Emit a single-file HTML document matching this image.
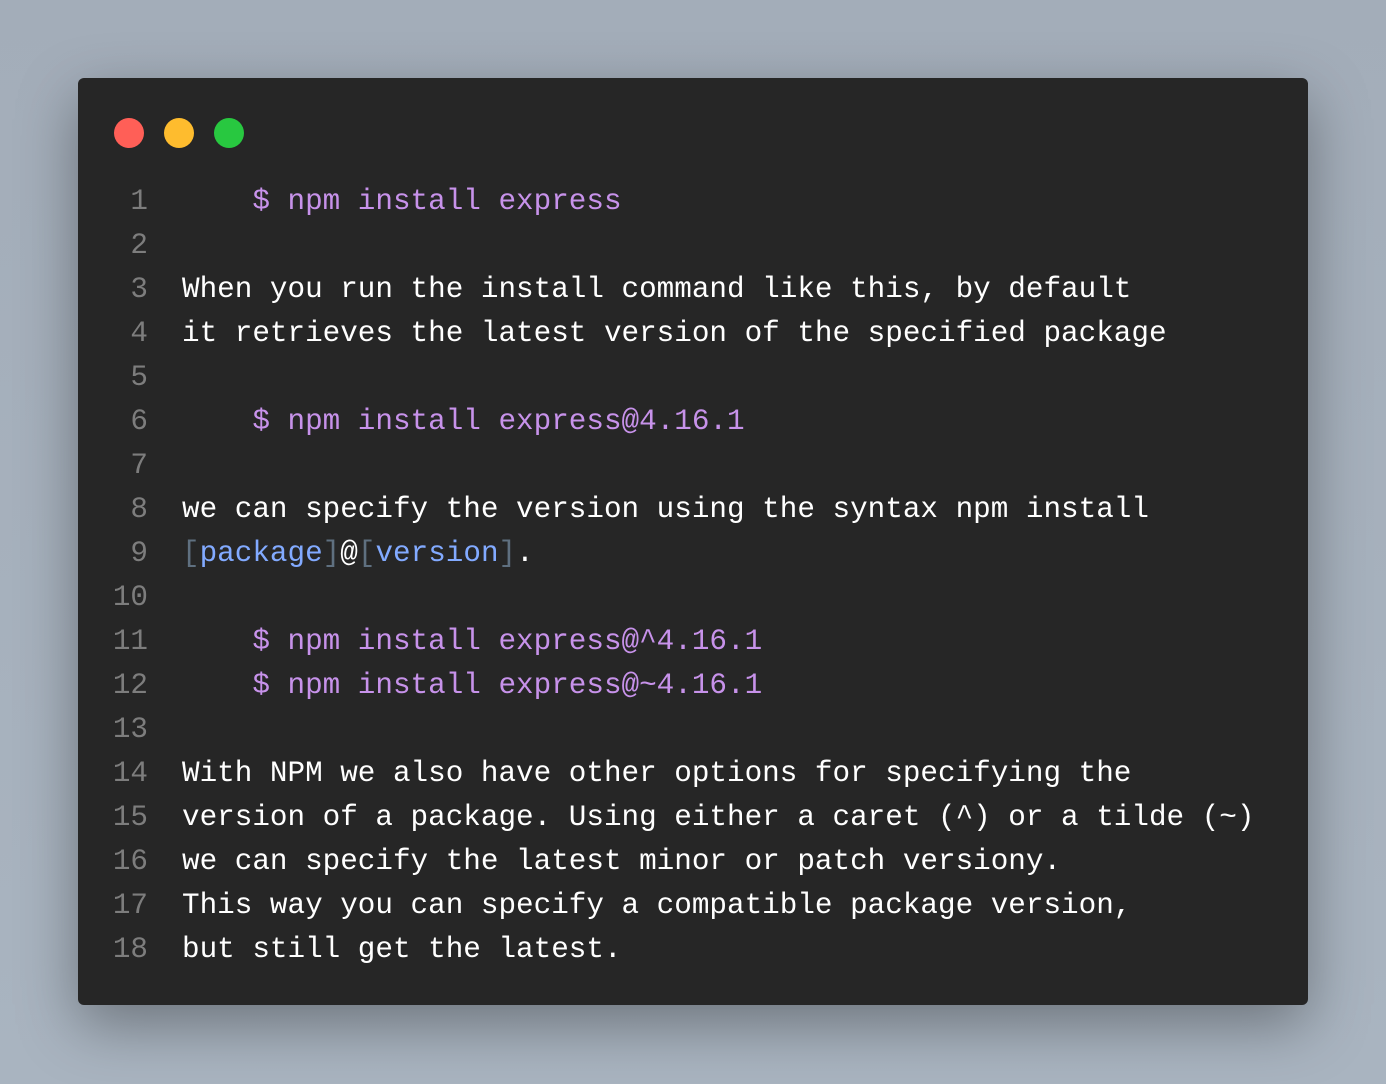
<!DOCTYPE html>
<html><head><style>
html,body{margin:0;padding:0;width:1386px;height:1084px;overflow:hidden;background:linear-gradient(180deg,#a3adb9,#a9b4c0);}
.card{position:absolute;left:78px;top:78px;width:1230px;height:927px;background:#262626;border-radius:6px;box-shadow:0 20px 60px rgba(0,0,0,.35);}
.dot{position:absolute;top:40px;width:30px;height:30px;border-radius:50%;}
.code{position:absolute;left:0;top:102px;font-family:"Liberation Mono",monospace;font-size:29.3px;line-height:44px;color:#fff;white-space:pre;}
.ln{display:inline-block;width:70px;text-align:right;color:#7d7d7d;margin-right:34px;}
.p{color:#c792ea;}
.b{color:#82aaff;}
.g{color:#5f7080;}
</style></head><body>
<div class="card">
<div class="dot" style="left:36px;background:#ff5f57"></div>
<div class="dot" style="left:86px;background:#febc2e"></div>
<div class="dot" style="left:136px;background:#28c840"></div>
<div class="code"><div><span class="ln">1</span><span class="p">    $ npm install express</span></div><div><span class="ln">2</span></div><div><span class="ln">3</span>When you run the install command like this, by default</div><div><span class="ln">4</span>it retrieves the latest version of the specified package</div><div><span class="ln">5</span></div><div><span class="ln">6</span><span class="p">    $ npm install express@4.16.1</span></div><div><span class="ln">7</span></div><div><span class="ln">8</span>we can specify the version using the syntax npm install</div><div><span class="ln">9</span><span class="g">[</span><span class="b">package</span><span class="g">]</span>@<span class="g">[</span><span class="b">version</span><span class="g">]</span>.</div><div><span class="ln">10</span></div><div><span class="ln">11</span><span class="p">    $ npm install express@^4.16.1</span></div><div><span class="ln">12</span><span class="p">    $ npm install express@~4.16.1</span></div><div><span class="ln">13</span></div><div><span class="ln">14</span>With NPM we also have other options for specifying the</div><div><span class="ln">15</span>version of a package. Using either a caret (^) or a tilde (~)</div><div><span class="ln">16</span>we can specify the latest minor or patch versiony.</div><div><span class="ln">17</span>This way you can specify a compatible package version,</div><div><span class="ln">18</span>but still get the latest.</div></div>
</div>
</body></html>
